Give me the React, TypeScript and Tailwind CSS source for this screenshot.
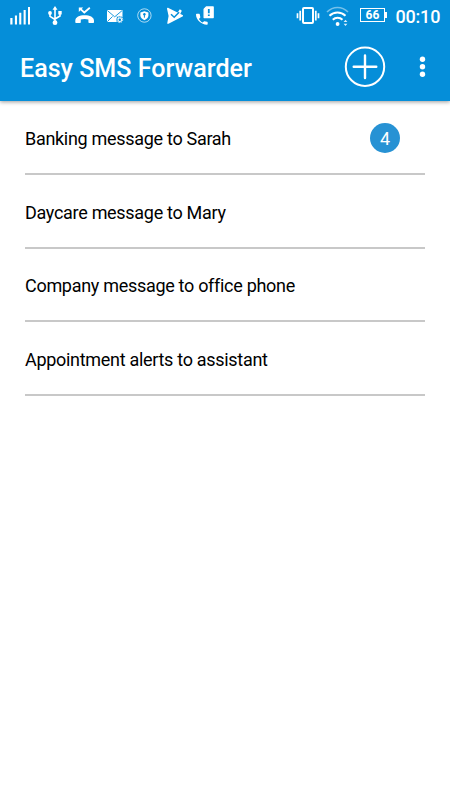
interface Forwarder {
  id: number;
  name: string;
  count?: number;
}

const forwarders: Forwarder[] = [
  { id: 1, name: "Banking message to Sarah", count: 4 },
  { id: 2, name: "Daycare message to Mary" },
  { id: 3, name: "Company message to office phone" },
  { id: 4, name: "Appointment alerts to assistant" },
];

function SignalIcon() {
  return (
    <svg className="h-5 w-[21px]" viewBox="0 0 21 20" fill="currentColor">
      <path d="M.3 12h2.2v6.5H.3zM4.9 9.5H7v9H4.9zM9.2 6.8h2.1v11.7H9.2zM13.6 4h2.1v14.5h-2.1zM18 1h2v17.5h-2z" />
    </svg>
  );
}

function UsbIcon() {
  return (
    <svg className="ml-[17px] h-5 w-[14px]" viewBox="0 0 14 20" fill="none" stroke="currentColor" strokeWidth="1.6">
      <path d="M7 3v13M2 7v3.3l5 3.2M12 7v3l-5 3" />
      <path d="M7 0l2.5 3.8h-5zM10.3 5h3.4v3.4h-3.4z" fill="currentColor" stroke="none" />
      <circle cx="2" cy="7" r="1.9" fill="currentColor" stroke="none" />
      <circle cx="7" cy="16.7" r="2.4" fill="currentColor" stroke="none" />
    </svg>
  );
}

function MissedCallIcon() {
  return (
    <svg className="ml-[13px] h-5 w-5" viewBox="0 0 20 20" fill="currentColor">
      <path d="M5 2.7l4.3 3.8 5.5-4.7" fill="none" stroke="currentColor" strokeWidth="1.8" />
      <path d="M3.8 1.6h4.4L3.8 6z" />
      <path d="M.3 14.7c0-3.7 4.2-5.5 9.3-5.5s9.4 1.8 9.4 5.5v1.5c0 .5-.3.8-.8.8h-4c-.5 0-.8-.3-.8-.8v-2.6c-2.3-.8-5.3-.8-7.6 0v2.6c0 .5-.3.8-.8.8h-4c-.4 0-.7-.3-.7-.8z" />
    </svg>
  );
}

function MailIcon() {
  return (
    <svg className="ml-3 h-5 w-[17px]" viewBox="0 0 17 20" fill="none">
      <path d="M0 4h15.5v12H0z" fill="currentColor" />
      <path d="M.3 4.5l7.4 6.3 7.5-6.3M.3 15.7l5.2-5.2M10 10.5l5 5" stroke="#058ed9" strokeWidth=".9" />
      <circle cx="12.8" cy="13.7" r="3.5" fill="#058ed9" />
      <circle cx="12.8" cy="13.7" r="1.8" stroke="currentColor" strokeWidth="1.1" />
      <circle cx="12.8" cy="13.7" r="2.9" stroke="currentColor" strokeWidth="1" strokeDasharray="1.2 1.1" />
    </svg>
  );
}

function ShieldIcon() {
  return (
    <svg className="ml-[13px] h-5 w-4" viewBox="0 0 16 20" fill="none">
      <circle cx="7.4" cy="9.5" r="6.7" stroke="currentColor" strokeWidth=".9" opacity=".75" />
      <path d="M7.4 5.2l4 1.2v3.2c0 2.2-1.7 3.7-4 4.7-2.3-1-4-2.5-4-4.7V6.4z" fill="currentColor" />
      <circle cx="7.4" cy="8.3" r="1.2" fill="#058ed9" />
      <path d="M7.4 8.5v3.2" stroke="#058ed9" strokeWidth="1" />
    </svg>
  );
}

function PlayCheckIcon() {
  return (
    <svg className="ml-[14px] h-5 w-[17px]" viewBox="0 0 17 20" fill="none">
      <path d="M0 2.7c0-.8.8-1.2 1.5-.8l14 7c.7.4.7 1.1 0 1.5L1.5 17.7c-.7.4-1.5 0-1.2-.8L1.6 10z" fill="currentColor" />
      <path d="M10.5 6.8l2.3-3.5 2 1.4-2 4z" fill="currentColor" />
      <path d="M4 8.3l3.2 3 4.9-5.1" stroke="#058ed9" strokeWidth="1.5" />
    </svg>
  );
}

function SimCallIcon() {
  return (
    <svg className="ml-3 h-5 w-[19px]" viewBox="0 0 19 20" fill="none">
      <path d="M10.3.9h6.9v10.7H8.1V3.2z" fill="currentColor" stroke="currentColor" strokeWidth="1.2" strokeLinejoin="round" />
      <path d="M12.8 3v4.3M12.8 8.4V10" stroke="#058ed9" strokeWidth="1.8" />
      <path d="M.7 7.8h2.4c.4 0 .6.2.7.6l.5 2.7c0 .3 0 .5-.2.7l-1.2 1.2c1 1.6 2.1 2.7 3.7 3.6l1.2-1.2c.2-.2.4-.3.7-.2l2.6.5c.4.1.6.3.6.7V18c0 .5-.3.7-.7.7C5.2 18.7 0 13.9 0 8.6c0-.5.3-.8.7-.8z" fill="currentColor" />
    </svg>
  );
}

function VibrateIcon() {
  return (
    <svg className="h-5 w-6" viewBox="0 0 24 20" fill="none" stroke="currentColor">
      <rect x="7" y="2" width="10" height="15" rx="1" strokeWidth="2" />
      <path d="M4.2 4.8v9.8M19.8 4.8v9.8M1.5 7.2v5M22.5 7.2v5" strokeWidth="1.7" />
    </svg>
  );
}

function WifiIcon() {
  return (
    <svg className="ml-1.5 h-[21px] w-6" viewBox="0 0 24 21" fill="none" stroke="currentColor">
      <path d="M1 6C7 0 16 0 22 6" strokeWidth="1.7" opacity=".45" />
      <path d="M3.5 9.8c4.4-4.5 11.5-4.5 16 0" strokeWidth="2" />
      <path d="M6.8 13.8c2.6-2.6 7-2.6 9.7 0" strokeWidth="2" />
      <circle cx="11.6" cy="18" r="1.9" fill="currentColor" stroke="none" />
      <path d="M17.6 16l1.9-2.2 1.9 2.2zM17.6 17.8l1.9 2.2 1.9-2.2z" fill="currentColor" stroke="none" opacity=".85" />
    </svg>
  );
}

function StatusBar() {
  return (
    <div className="flex h-8 items-center px-2.5">
      <div className="flex items-center">
        <SignalIcon />
        <UsbIcon />
        <MissedCallIcon />
        <MailIcon />
        <ShieldIcon />
        <PlayCheckIcon />
        <SimCallIcon />
      </div>
      <div className="ml-auto flex items-center">
        <VibrateIcon />
        <WifiIcon />
        <div className="mb-[2px] ml-[10px] flex items-center">
          <span className="flex h-[14px] w-[25px] items-center justify-center border border-white text-[12px] leading-none font-bold">
            66
          </span>
          <span className="h-1.5 w-[1.5px] bg-white" />
        </div>
        <span className="ml-[9px] w-[44.5px] pt-px text-[18px] leading-8 font-medium tracking-[-0.2px] whitespace-nowrap">
          00:10
        </span>
      </div>
    </div>
  );
}

function AppBar() {
  return (
    <div className="flex h-[69px] items-center pl-5">
      <h1 className="pt-1 text-[25.1px] leading-8 font-medium whitespace-nowrap">Easy SMS Forwarder</h1>
      <button className="ml-auto" aria-label="Add forwarder">
        <svg className="h-[42px] w-[42px]" viewBox="0 0 42 42" fill="none" stroke="currentColor" strokeWidth="2">
          <circle cx="21" cy="20.7" r="19.2" />
          <path d="M21 9.4V32M9.7 20.7h22.6" strokeWidth="2.4" strokeLinecap="round" />
        </svg>
      </button>
      <button className="mr-[19px] ml-[28px]" aria-label="More options">
        <svg className="h-6 w-[17px]" viewBox="0 0 17 24" fill="currentColor">
          <circle cx="8.5" cy="4.2" r="2.7" />
          <circle cx="8.5" cy="11.7" r="2.7" />
          <circle cx="8.5" cy="19.3" r="2.7" />
        </svg>
      </button>
    </div>
  );
}

function ForwarderRow({ item }: { item: Forwarder }) {
  return (
    <li className="flex h-[73.75px] items-center justify-between border-b-2 border-[#c8c8c8] pt-[3px] pr-[25px]">
      <span className="pt-px text-[18px] leading-6 tracking-[-0.3px] text-black">{item.name}</span>
      {item.count !== undefined && (
        <span className="flex h-[30px] w-[30px] items-center justify-center rounded-full bg-[#2792d4] text-[18px] text-white">
          {item.count}
        </span>
      )}
    </li>
  );
}

export default function App() {
  return (
    <div className="h-[800px] w-[450px] overflow-hidden bg-white font-['Roboto',sans-serif]">
      <header className="h-[101px] bg-[#058ed9] text-white shadow-[0_1px_4px_rgba(0,0,0,0.4)]">
        <StatusBar />
        <AppBar />
      </header>
      <ul className="px-[25px]">
        {forwarders.map((item) => (
          <ForwarderRow key={item.id} item={item} />
        ))}
      </ul>
    </div>
  );
}
